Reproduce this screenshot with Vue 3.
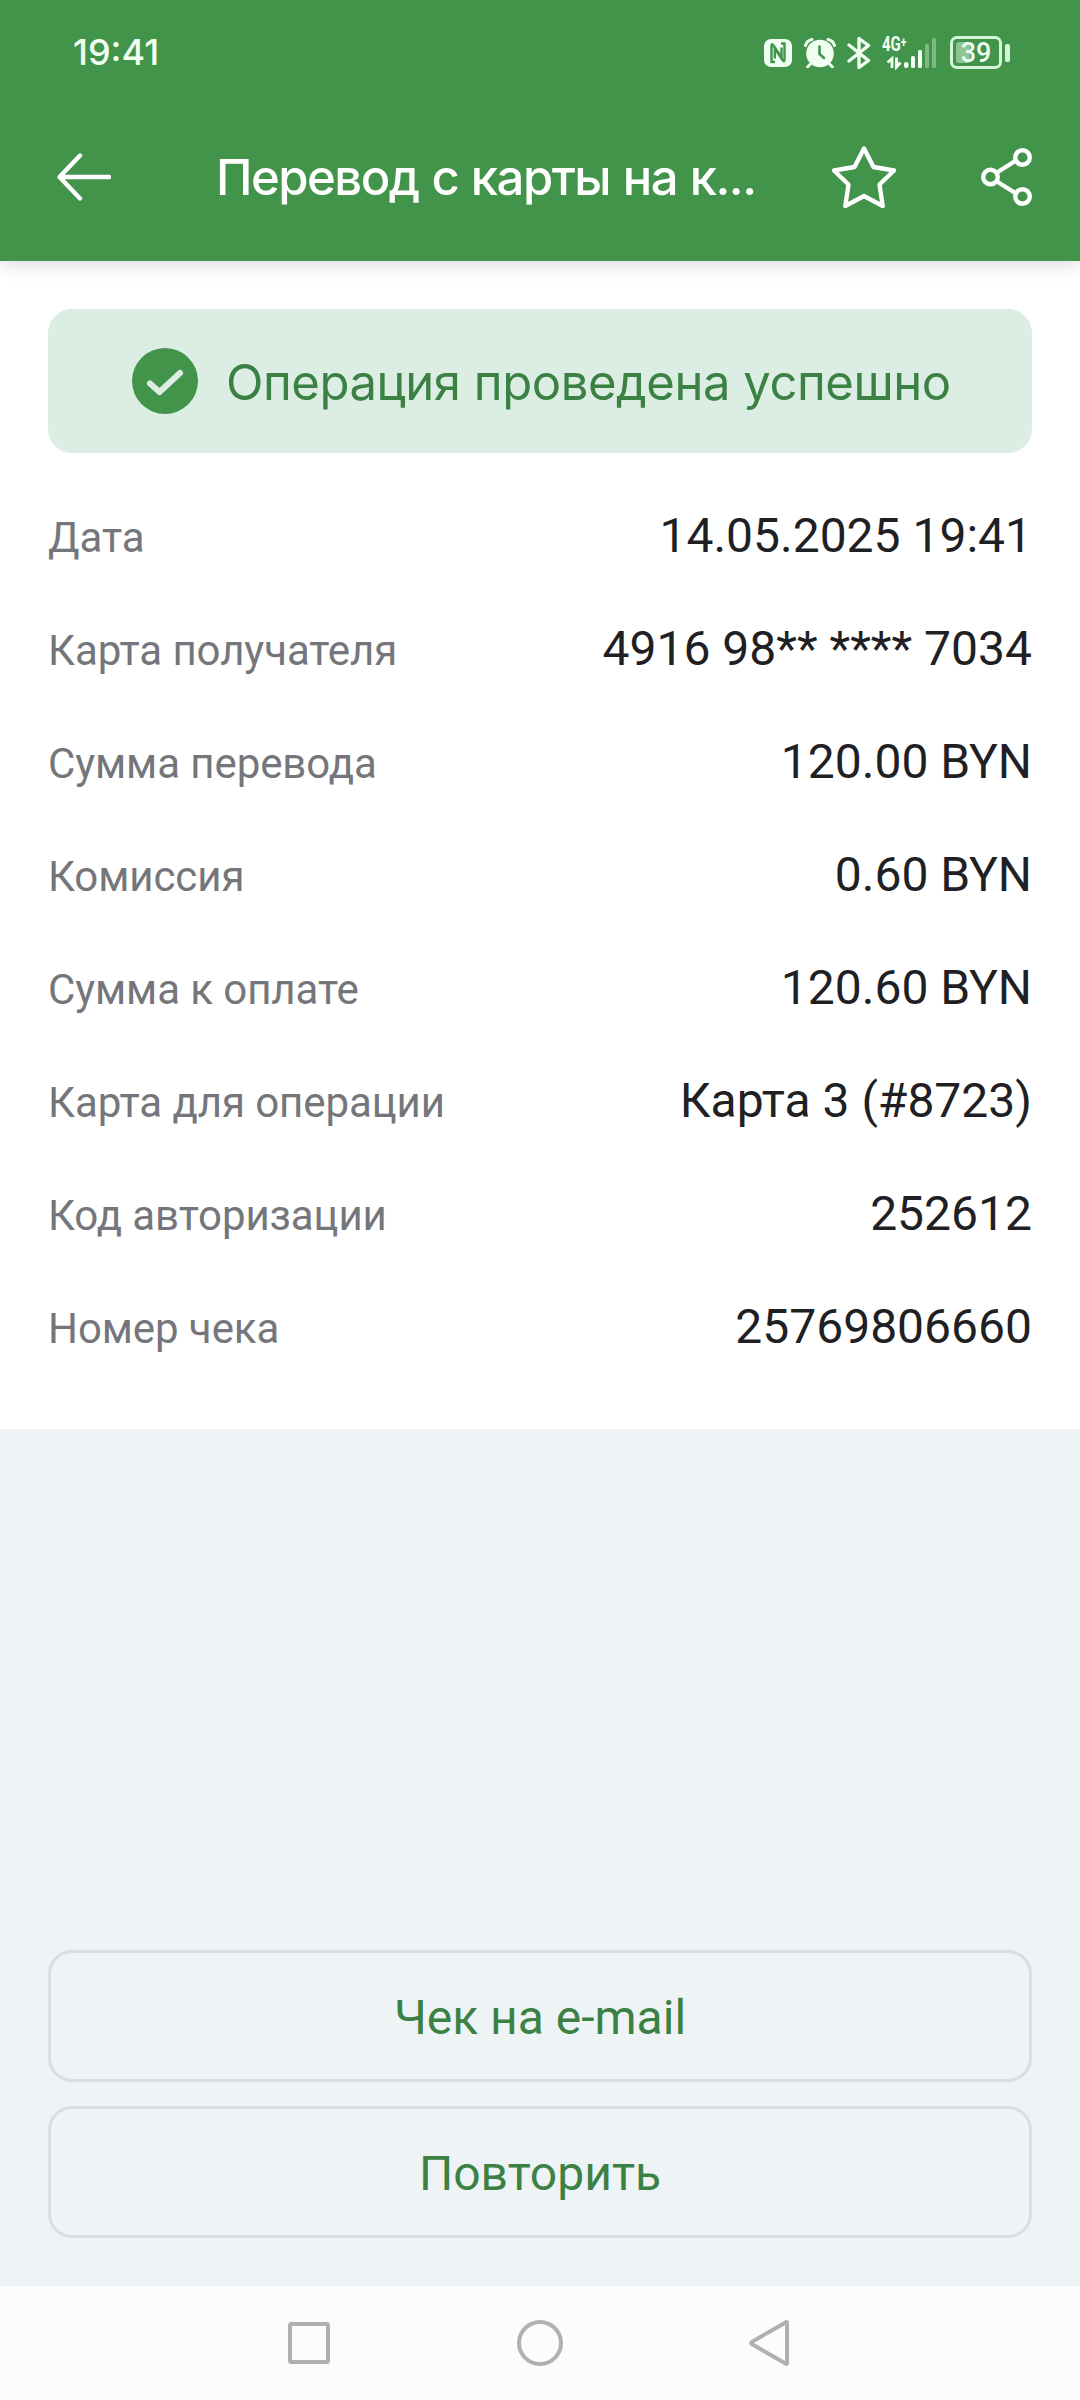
<template>
  <div class="screen">
    <header class="top">
      <div class="status-bar">
        <span class="clock">19:41</span>
        <div class="status-icons">
          <svg class="icon-nfc" width="28" height="28" viewBox="0 0 28 28">
            <rect width="28" height="28" rx="7" fill="#f0fff1" />
            <path d="M11 23H7.500V6.500Q7.500 4 9.500 6.500L17.500 18.500V8.500" />
            <path d="M17 4.500H20.500V21Q20.500 23.500 18.500 21L10.800 9.500V19.500" />
          </svg>
          <svg class="icon-alarm" width="32" height="30" viewBox="0 0 32 30">
            <circle cx="16" cy="15.500" r="13.800" fill="#f0fff1" />
            <path d="M1.500 7.500Q3 2.500 8 1.500M30.500 7.500Q29 2.500 24 1.500M7 25.500L3.500 29M25 25.500L28.500 29" fill="none" stroke="#f0fff1" stroke-width="3" stroke-linecap="round" />
            <path d="M15.500 8.500V16L20 20" fill="none" stroke="#41944a" stroke-width="2.600" stroke-linecap="round" />
          </svg>
          <svg class="icon-bt" width="24" height="34" viewBox="0 0 24 34">
            <path d="M2 9L21.500 24.500L12 31.500V2.500L21.500 9.500L2 25" />
          </svg>
          <div class="network">
            <span class="net-type">4G<sup>+</sup></span>
            <svg width="56" height="34" viewBox="0 0 56 34">
              <path d="M6.500 26.500L11 22.500V32M15.500 21.500V31L19.500 26.500" fill="none" stroke="#f0fff1" stroke-width="2.800" />
              <g fill="#f0fff1">
                <rect x="23" y="26" width="4.500" height="6" rx="2" />
                <rect x="30" y="20" width="4" height="12" rx="1.500" />
                <rect x="37" y="14" width="4" height="18" rx="1.500" />
                <rect x="44" y="8" width="4" height="24" rx="1.500" opacity=".35" />
                <rect x="51" y="2" width="4" height="30" rx="1.500" opacity=".35" />
              </g>
            </svg>
          </div>
          <div class="battery">
            <div class="battery-body">
              <span class="battery-fill"></span>
              <span class="battery-value">39</span>
            </div>
            <span class="battery-cap"></span>
          </div>
        </div>
      </div>
      <div class="toolbar">
        <svg class="icon-back" width="54" height="48" viewBox="0 0 54 48">
          <path d="M23 2.500L2.500 24L23 45.500M3 24H52" />
        </svg>
        <h1>Перевод с карты на к...</h1>
        <svg class="icon-star" width="64" height="62" viewBox="0 0 64 62">
          <path d="M32 2.500L41.500 21L62 24.500L47.500 38.500L50.700 60L32 50L13.300 60L16.500 38.500L2 24.500L22.500 21Z" />
        </svg>
        <svg class="icon-share" width="52" height="58" viewBox="0 0 52 58">
          <circle cx="9.500" cy="29" r="7.300" />
          <circle cx="41.500" cy="9.500" r="7.300" />
          <circle cx="41.500" cy="48.500" r="7.300" />
          <path d="M16 24.500L35 12.500M16 33.500L35 45.500" />
        </svg>
      </div>
    </header>

    <section class="receipt">
      <div class="banner">
        <svg width="66" height="66" viewBox="0 0 66 66">
          <circle cx="33" cy="33" r="33" fill="#41944a" />
          <path d="M18 35.500L27.500 44L48 25" fill="none" stroke="#dceee4" stroke-width="6" stroke-linecap="round" stroke-linejoin="round" />
        </svg>
        <span class="banner-text">Операция проведена успешно</span>
      </div>
      <div v-for="row in rows" :key="row.label" class="row">
        <span class="label">{{ row.label }}</span>
        <span class="value">{{ row.value }}</span>
      </div>
    </section>

    <div class="actions">
      <button v-for="action in actions" :key="action" class="btn">{{ action }}</button>
    </div>

    <nav class="nav-bar">
      <svg width="46" height="46" viewBox="0 0 46 46"><rect x="4" y="4" width="38" height="38" rx="1.500" /></svg>
      <svg width="46" height="46" viewBox="0 0 46 46"><circle cx="23" cy="23" r="21" /></svg>
      <svg width="46" height="46" viewBox="0 0 46 46"><path d="M39 2.500V43.500Q39 44.500 38 43.800L4 24.200Q2.500 23 4 21.800L38 2.200Q39 1.500 39 2.500Z" /></svg>
    </nav>
  </div>
</template>

<script setup>
import { ref } from 'vue'

const rows = ref([
  { label: 'Дата', value: '14.05.2025 19:41' },
  { label: 'Карта получателя', value: '4916 98** **** 7034' },
  { label: 'Сумма перевода', value: '120.00 BYN' },
  { label: 'Комиссия', value: '0.60 BYN' },
  { label: 'Сумма к оплате', value: '120.60 BYN' },
  { label: 'Карта для операции', value: 'Карта 3 (#8723)' },
  { label: 'Код авторизации', value: '252612' },
  { label: 'Номер чека', value: '25769806660' }
])

const actions = ['Чек на e-mail', 'Повторить']
</script>

<style>
body {
  margin: 0;
  background: #eef3f6;
}
</style>

<style scoped>
.screen {
  display: flex;
  flex-direction: column;
  width: 1080px;
  height: 2400px;
  overflow: hidden;
  background: #eef3f6;
  font-family: Roboto, "Noto Sans", sans-serif;
}

.screen * {
  box-sizing: border-box;
}

svg {
  display: block;
  flex: none;
}

.top {
  position: relative;
  height: 261px;
  flex: none;
  background: #41944a;
  color: #fff;
  box-shadow: 0 3px 18px rgba(0, 0, 0, 0.15);
}

.status-bar {
  display: flex;
  align-items: center;
  justify-content: space-between;
  height: 105px;
  padding: 0 70px 0 73px;
  color: #f0fff1;
}

.clock {
  padding-bottom: 2px;
  font-family: Inter, sans-serif;
  font-size: 36px;
  font-weight: 500;
  line-height: 40px;
}

.status-icons {
  display: flex;
  align-items: center;
}

.icon-nfc path {
  fill: none;
  stroke: #41944a;
  stroke-width: 2.4;
}

.icon-alarm {
  margin-left: 12px;
}

.icon-bt {
  margin-left: 11px;
}

.icon-bt path {
  fill: none;
  stroke: #f0fff1;
  stroke-width: 3.4;
  stroke-linecap: round;
  stroke-linejoin: round;
}

.network {
  position: relative;
  margin-left: 10px;
}

.net-type {
  position: absolute;
  left: 1px;
  top: 0;
  font-family: Roboto, sans-serif;
  font-size: 20px;
  font-weight: 700;
  line-height: 16px;
  white-space: nowrap;
  transform: scaleX(0.75);
  transform-origin: left;
}

.net-type sup {
  font-size: 14px;
  line-height: 0;
  vertical-align: 4px;
}

.battery {
  display: flex;
  align-items: center;
  margin-left: 13px;
}

.battery-body {
  position: relative;
  width: 52px;
  height: 33px;
  border: 3px solid #d5f5d8;
  border-radius: 7px;
  text-align: center;
}

.battery-fill {
  position: absolute;
  left: 3px;
  top: 3px;
  width: 14px;
  height: 21px;
  border-radius: 3px;
  background: rgba(240, 255, 241, 0.45);
}

.battery-value {
  display: block;
  position: relative;
  font-family: Roboto, sans-serif;
  font-size: 27px;
  font-weight: 500;
  line-height: 28px;
}

.battery-cap {
  width: 5px;
  height: 18px;
  margin-left: 3px;
  border-radius: 2px;
  background: #d5f5d8;
}

.toolbar {
  display: flex;
  align-items: center;
  height: 144px;
  padding: 0 47px 0 57px;
}

.toolbar path,
.toolbar circle {
  fill: none;
  stroke: #fff;
  stroke-width: 4.4;
  stroke-linecap: round;
  stroke-linejoin: round;
}

h1 {
  flex: 1;
  margin: 0 0 0 105px;
  padding-top: 2px;
  font-family: Inter, sans-serif;
  font-size: 49px;
  font-weight: 500;
  line-height: 60px;
  letter-spacing: -1.5px;
  word-spacing: 1.1px;
  white-space: nowrap;
}

.icon-share {
  margin-left: 85px;
}

.receipt {
  height: 1168px;
  flex: none;
  padding: 48px 48px 0;
  background: #fff;
}

.banner {
  display: flex;
  align-items: center;
  height: 144px;
  margin-bottom: 26px;
  padding-left: 84px;
  gap: 28px;
  border-radius: 24px;
  background: #dceee4;
}

.banner-text {
  padding-top: 3px;
  color: #3b8144;
  font-family: Inter, sans-serif;
  font-size: 49px;
  line-height: 60px;
  letter-spacing: -0.46px;
  white-space: nowrap;
}

.row {
  display: flex;
  justify-content: space-between;
  align-items: baseline;
  height: 113px;
  line-height: 113px;
}

.label {
  color: #75767b;
  font-size: 42px;
  letter-spacing: -0.08px;
}

.value {
  color: #1f1f24;
  font-size: 48px;
}

.actions {
  display: flex;
  flex: 1;
  flex-direction: column;
  justify-content: flex-end;
  gap: 24px;
  padding: 0 48px 48px;
}

.btn {
  height: 132px;
  padding: 2px 0 0;
  border: 3px solid #d9dee1;
  border-radius: 24px;
  background: transparent;
  color: #3b8144;
  font-family: Roboto, sans-serif;
  font-size: 48px;
}

.nav-bar {
  display: flex;
  align-items: center;
  justify-content: space-between;
  height: 114px;
  flex: none;
  padding: 0 286px;
  background: #fcfcfc;
}

.nav-bar svg * {
  fill: none;
  stroke: #b0b0b0;
  stroke-width: 4;
}
</style>
